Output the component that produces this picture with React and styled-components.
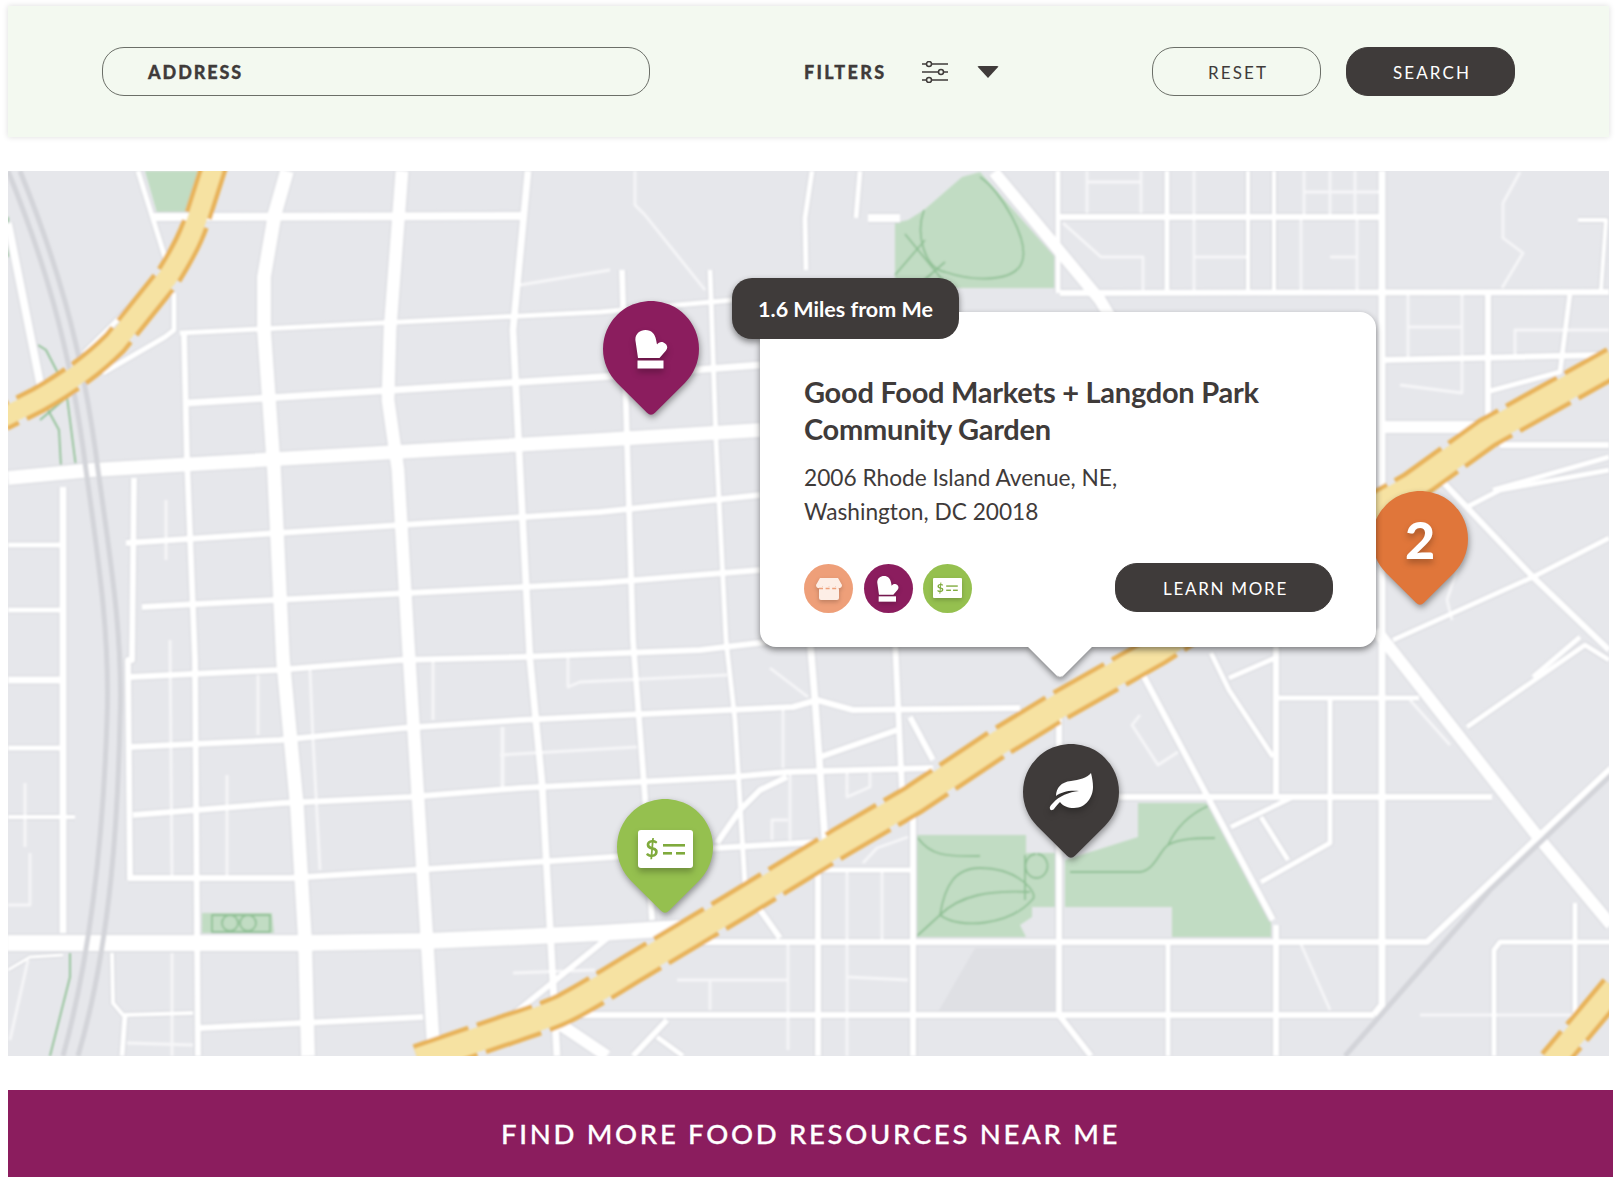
import styled, { createGlobalStyle } from 'styled-components';

const DARK = '#3f3b3a';
const PLUM = '#8b1d5e';
const LEAF = '#95c04f';

const GlobalStyle = createGlobalStyle`
  html, body { margin: 0; padding: 0; background: #fff; }
  body { font-family: "Lato", "Liberation Sans", sans-serif; color: ${DARK}; }
`;

const Page = styled.div`
  width: 1618px;
  height: 1180px;
  box-sizing: border-box;
  padding: 6px 5px 0 8px;
  display: flex;
  flex-direction: column;
  overflow: hidden;
`;

const Toolbar = styled.div`
  width: 1601px;
  height: 131px;
  box-sizing: border-box;
  padding: 0 94px;
  background: #f3f9f0;
  box-shadow: 0 0 6px rgba(0, 0, 0, 0.14);
  display: flex;
  align-items: center;
`;

const AddressField = styled.div`
  width: 548px;
  height: 49px;
  box-sizing: border-box;
  padding-left: 45px;
  border: 1px solid #6b6f68;
  border-radius: 22px;
  display: flex;
  align-items: center;
  font-size: 18px;
  font-weight: 900;
  letter-spacing: 1.9px;
  -webkit-text-stroke: 0.3px ${DARK};
  margin-right: 154px;
`;

const Filters = styled.div`
  display: flex;
  align-items: center;
  font-size: 18px;
  font-weight: 900;
  letter-spacing: 2.3px;
  -webkit-text-stroke: 0.3px ${DARK};
`;

const SliderIcon = styled.svg`
  width: 26px;
  height: 22px;
  margin-left: 36px;
`;

const Caret = styled.div`
  width: 0;
  height: 0;
  margin-left: 29px;
  border-left: 11px solid transparent;
  border-right: 11px solid transparent;
  border-top: 12px solid ${DARK};
  border-radius: 2px;
`;

const Actions = styled.div`
  margin-left: auto;
  display: flex;
  gap: 25px;
`;

const PillButton = styled.button`
  width: 169px;
  height: 49px;
  box-sizing: border-box;
  border-radius: 22px;
  border: 1px solid ${(p) => (p.$dark ? DARK : '#6b6f68')};
  background: ${(p) => (p.$dark ? DARK : 'transparent')};
  color: ${(p) => (p.$dark ? '#fff' : DARK)};
  font-family: inherit;
  font-size: 17px;
  letter-spacing: 2.1px;
  padding: 2px 0 0 3px;
`;

const LearnMoreButton = styled(PillButton)`
  width: 218px;
  letter-spacing: 1.7px;
`;

const MapArea = styled.div`
  position: relative;
  width: 1601px;
  height: 885px;
  margin-top: 34px;
  flex: none;
`;

const MapDrawing = styled.svg`
  display: block;
  width: 1601px;
  height: 885px;
`;

const Pin = styled.div`
  position: absolute;
  left: ${(p) => p.$x - 8 - 48}px;
  top: ${(p) => p.$y - 171 - 48}px;
  width: 96px;
  height: 116px;
  display: flex;
  justify-content: center;
`;

const PinShape = styled.svg`
  position: absolute;
  left: 0;
  top: 0;
  filter: drop-shadow(1px 3px 3px rgba(0, 0, 0, 0.38));
`;

const PinGlyph = styled.div`
  position: relative;
  height: ${(p) => p.$height || 96}px;
  display: flex;
  align-items: center;
  filter: drop-shadow(0 4px 3px rgba(0, 0, 0, 0.25));
`;

const PinNumber = styled.span`
  color: #fff;
  font-size: 52px;
  font-weight: 900;
  line-height: 96px;
`;

const Card = styled.div`
  position: absolute;
  left: 752px;
  top: 141px;
  width: 616px;
  height: 335px;
  box-sizing: border-box;
  padding: 62px 43px 0 44px;
  background: #fff;
  border-radius: 16px;
  filter: drop-shadow(0 3px 3px rgba(0, 0, 0, 0.45));

  &::after {
    content: '';
    position: absolute;
    left: 276px;
    bottom: -22px;
    width: 48px;
    height: 48px;
    background: #fff;
    border-radius: 0 0 5px 0;
    transform: rotate(45deg);
  }
`;

const DistanceTag = styled.div`
  position: absolute;
  left: -28px;
  top: -34px;
  width: 227px;
  height: 61px;
  border-radius: 20px;
  background: ${DARK};
  color: #fff;
  display: flex;
  align-items: center;
  justify-content: center;
  font-size: 21.5px;
  font-weight: 700;
`;

const Title = styled.h2`
  margin: 0 0 14px;
  font-size: 29px;
  line-height: 36.5px;
  font-weight: 700;
  letter-spacing: -0.26px;
`;

const Address = styled.p`
  margin: 0 0 34px;
  font-size: 22.7px;
  line-height: 33.5px;
`;

const CardFooter = styled.div`
  display: flex;
  align-items: center;
  justify-content: space-between;
  position: relative;
  z-index: 1;
`;

const Badges = styled.div`
  display: flex;
  gap: 10.5px;
  margin-top: 2px;
`;

const Badge = styled.div`
  width: 49px;
  height: 49px;
  border-radius: 50%;
  background: ${(p) => p.$color};
  display: flex;
  align-items: center;
  justify-content: center;

  svg {
    filter: drop-shadow(0 2px 2px rgba(0, 0, 0, 0.2));
  }
`;

const Banner = styled.div`
  width: 1605px;
  height: 87px;
  margin-top: 34px;
  flex: none;
  background: ${PLUM};
  color: #fff;
  display: flex;
  align-items: center;
  justify-content: center;
  font-size: 27.5px;
  font-weight: 500;
  letter-spacing: 2.7px;
  -webkit-text-stroke: 0.3px #fff;
`;

// wide roads get a faint darker edge, like the blocks on the base map
const roads = [
  [14, '287,171 275,213 264,277 264,330 274,470 283,660 297,807 305,940 308,1056'],
  [13, '402,171 390,330 388,400 398,470 408,640 427,940 434,1056'],
  [7, '528,171 513,330 520,470 530,660 542,783 550,927 557,1056'],
  [6, '622,270 627,440 633,640 645,797 652,920'],
  [5, '710,270 716,440 726,640 735,720 745,885'],
  [7, '810,640 815,700 825,840'],
  [6, '895,640 902,790'],
  [6, '913,810 913,1056'],
  [6, '818,870 818,1056'],
  [6, '1059,690 1059,1015 1091,1056'],
  [5, '1168,942 1168,1056'],
  [6, '1276,640 1276,797'],
  [6, '1276,925 1276,1056'],
  [5, '1330,700 1330,843 1261,882'],
  [7, '1382,171 1382,1005 1374,1015'],
  [12, '994,172 1100,300 1115,325'],
  [12, '1376,630 1538,837 1611,925'],
  [6, '1142,673 1273,920'],
  [5, '1211,653 1229,690 1273,757'],
  [5, '1229,678 1275,658'],
  [6, '700,942 1427,942 1542,833 1611,768'],
  [5, '1494,1056 1494,950 1500,942 1611,942'],
  [5, '1575,903 1575,1056'],
  [6, '580,1015 1374,1015'],
  [6, '1059,797 1293,797 1492,797'],
  [5, '1293,797 1231,827'],
  [5, '1277,698 1419,698'],
  [5, '1467,727 1585,645 1609,660'],
  [5, '1261,817 1288,860'],
  [8, '153,217 523,216'],
  [8, '868,218 900,218'],
  [6, '1060,217 1380,217'],
  [6, '1060,293 1609,292'],
  [5, '180,333 600,312 733,300'],
  [7, '187,403 600,377 760,365'],
  [14, '8,478 92,470 600,440 760,430'],
  [6, '126,543 600,512 760,495'],
  [6, '142,607 600,583 760,570'],
  [6, '130,677 277,670 400,660 520,657 700,650 767,642'],
  [6, '130,747 280,740 403,728 520,720 727,710 793,707 817,700 853,710 1020,708'],
  [6, '133,815 283,803 410,797 520,788 733,777 787,772 933,768'],
  [6, '128,878 290,878 413,870 520,863 613,857 717,848 817,842'],
  [16, '7,943 300,943 427,941 520,937 600,933 680,928'],
  [6, '200,1028 423,1017'],
  [7, '63,487 63,933'],
  [8, '8,223 42,393'],
  [6, '184,333 187,460 195,660 198,1056'],
  [6, '134,478 132,660 128,660 130,880'],
  [7, '8,680 63,680'],
  [5, '8,748 60,748'],
  [4, '8,817 75,817'],
  [5, '8,545 60,545'],
  [5, '8,610 60,610'],
  [5, '138,171 168,267'],
  [5, '168,270 84,353'],
  [5, '174,293 174,330 165,337 103,373'],
  [4, '112,953 113,1003 123,1015 193,1013'],
  [5, '125,1015 122,1056'],
  [3, '8,970 30,957 63,955'],
  [6, '717,843 740,810 760,790 787,777'],
  [6, '820,757 897,730'],
  [6, '910,717 933,760'],
  [5, '817,870 913,870'],
  [6, '758,907 780,938'],
  [6, '610,936 510,1017'],
  [12, '558,1023 607,1056'],
  [6, '667,1020 633,1056'],
  [5, '657,1037 683,1056'],
  [6, '1488,293 1488,427'],
  [12, '1380,427 1487,427'],
  [6, '1382,360 1600,355'],
  [5, '1490,391 1560,372 1570,293'],
  [6, '1500,445 1609,445'],
  [5, '1493,490 1609,457'],
  [6, '1443,482 1533,577 1609,650'],
  [5, '1467,507 1500,490 1609,470'],
  [5, '1393,640 1533,577 1609,538'],
  [5, '1580,637 1533,677'],
  [4, '1578,220 1606,220 1601,290'],
  [5, '1058,171 1058,293'],
  [5, '1167,171 1167,293'],
  [4, '1248,171 1248,293'],
  [4, '1274,171 1274,293'],
  [5, '860,171 856,218'],
  [5, '812,171 805,218 806,270'],
];

const lanes = [
  '520,285 610,270',
  '635,171 635,205 645,215 705,290',
  '1087,171 1087,213',
  '1141,171 1141,213',
  '1087,182 1141,182',
  '1194,171 1194,293',
  '1194,257 1248,257',
  '1063,223 1101,257 1143,257 1143,290',
  '1304,171 1304,217',
  '1304,192 1382,192',
  '1301,220 1301,290',
  '1330,171 1330,217',
  '1355,171 1355,217',
  '1330,257 1357,257',
  '1357,220 1357,290',
  '1408,293 1408,357',
  '1462,293 1462,393 1400,385',
  '1408,327 1462,327',
  '1515,357 1515,330 1609,330',
  '568,655 568,687 580,682 727,675',
  '503,727 503,787',
  '500,755 637,747',
  '770,668 808,697',
  '783,707 783,768',
  '790,773 790,840',
  '847,773 847,797 870,787 870,773',
  '772,840 772,820 788,820',
  '863,863 877,848 908,837',
  '847,870 847,1056',
  '882,870 882,942',
  '788,942 788,1050',
  '677,980 788,980',
  '710,980 710,1010',
  '847,977 908,980',
  '513,973 595,970',
  '170,640 172,880',
  '172,953 172,1056',
  '127,1043 193,1045',
  '227,775 227,880',
  '258,675 258,735',
  '310,670 313,740 320,870',
  '433,660 433,720',
  '502,727 502,787',
  '25,783 25,847',
  '30,853 30,905 8,905',
  '28,960 10,1040',
  '166,500 166,560',
  '1450,745 1410,700',
  '1420,1015 1595,1015',
  '1300,942 1330,1010',
  '1520,172 1503,203 1503,238 1523,253 1502,288',
  '1405,555 1460,560 1447,600 1452,620',
  '1140,715 1132,725 1158,765 1178,752',
];

const railLines = [
  'M8 171 C40 250 70 340 86 470 C100 570 110 640 107 720 C104 810 95 940 63 1056',
  'M20 171 C52 250 82 340 98 470 C112 570 123 640 120 720 C118 810 112 940 78 1056',
  'M1611 775 L1490 890 L1345 1056',
];

const highways = [
  [33, 'M418 1060 L500 1032 C530 1022 550 1016 567 1007 C590 995 610 982 633 968 L733 908 L841 842 L913 800 L1000 742 L1059 706 L1158 650 L1380 505 L1412 487 L1487 433 L1614 362'],
  [28, 'M216 160 L199 213 C192 235 186 248 168 277 L115 343 C95 363 70 382 38 400 L2 418'],
  [30, 'M1614 988 L1552 1062'],
];

const parks = [
  '145,171 205,171 191,213 157,213',
  '980,172 1055,257 1055,288 895,288 895,223 908,220 924,210 962,177',
  '1138,803 1208,803 1271,920 1271,937 1172,937 1172,907 1065,907 1065,860 1138,837',
  '917,835 1026,835 1026,853 1055,853 1055,907 1032,907 1032,917 1020,925 1026,937 917,937',
  '202,913 272,913 274,933 202,933',
];

const trails = [
  'M924 210 C915 235 925 268 945 272 C975 282 1015 282 1022 262 C1030 240 1000 190 980 177',
  'M905 234 L945 283 M895 275 L925 240 M915 288 L945 262',
  'M918 838 C930 855 945 857 980 856',
  'M917 936 L940 915 C945 885 955 868 980 868 C1020 868 1040 895 1032 900 C1010 925 960 930 940 915 C960 895 990 890 1030 892',
  'M1070 872 H1140 C1155 870 1160 850 1168 845 C1175 830 1188 815 1208 806 M1168 845 C1180 838 1200 838 1215 838',
  'M1036 854 a11 12 0 1 0 1 0 M1025 855 V900',
  'M212 915 V932 H270 V915 Z M222 923 a8 8 0 1 0 16 0 a8 8 0 1 0 -16 0 M240 923 a8 8 0 1 0 16 0 a8 8 0 1 0 -16 0',
  'M38 345 L46 350 L63 383 M48 410 L59 430 L61 467 M67 397 L76 467 M40 420 L67 397',
  'M70 953 V977 L50 1056',
  'M8 217 V257',
];

function CityMap() {
  return (
    <MapDrawing viewBox="8 171 1601 885">
      <defs>
        <filter id="soft">
          <feGaussianBlur stdDeviation="0.8" />
        </filter>
      </defs>
      <rect x="8" y="171" width="1601" height="885" fill="#e6e7eb" />
      <g filter="url(#soft)" fill="none" strokeLinejoin="round">
        <polygon points="975,948 1055,948 1055,1012 938,1012" fill="#dfe0e4" />
        {parks.map((p) => (
          <polygon key={p} points={p} fill="#c1dcc3" />
        ))}
        {trails.map((d) => (
          <path key={d} d={d} stroke="#8fc094" strokeWidth="1.8" />
        ))}
        {roads.map(([w, pts]) => (
          <polyline key={pts} points={pts} stroke="#d9dadf" strokeWidth={w + 2.5} />
        ))}
        {lanes.map((pts) => (
          <polyline key={pts} points={pts} stroke="#f6f6f8" strokeWidth="2.8" />
        ))}
        {roads.map(([w, pts]) => (
          <polyline key={pts} points={pts} stroke="#fff" strokeWidth={w} />
        ))}
        {railLines.map((d) => (
          <path key={d} d={d} stroke="#d3d4d9" strokeWidth="5" />
        ))}
        {highways.map(([w, d]) => (
          <g key={d}>
            <path d={d} stroke="#e8b35a" strokeWidth={w} strokeDasharray="58 9" />
            <path d={d} stroke="#f6e2a2" strokeWidth={w - 9} />
          </g>
        ))}
      </g>
    </MapDrawing>
  );
}

function Teardrop({ color }) {
  return (
    <PinShape width="96" height="116" viewBox="0 0 96 116">
      <path d="M14.1 81.9 A48 48 0 1 1 81.9 81.9 L52 111.8 Q48 115.8 44 111.8 Z" fill={color} />
    </PinShape>
  );
}

function Mitt({ size = 33 }) {
  return (
    <svg width={size} height={(size * 39) / 33} viewBox="0 0 33 39" fill="#fff">
      <path d="M3 28 L0.5 11 C-0.5 4.5 4.5 0 10.5 0 C16.5 0 20 4 21 9.5 L22 14.5 C23.5 12.5 26 11.5 28.5 12.5 C32 14 33.5 17.5 31 20.5 L24.5 28 Z" />
      <rect x="2.5" y="30.5" width="26" height="8" />
    </svg>
  );
}

function Leaf() {
  return (
    <svg width="44" height="38" viewBox="0 0 44 38" fill="#fff">
      <path d="M42 0 C38 5 30 7 22 8 C12 9 7 15 7 23 C12 19 20 17 30 18 C20 19 10 23 4 30 C2 32 0 34 1 36 C2 38 4 37 5 36 C7 33 9 31 11 29 C14 33 19 35 25 35 C37 35 44 24 44 14 C44 9 43 4 42 0 Z" />
    </svg>
  );
}

function Voucher({ width, radius = 3 }) {
  return (
    <svg width={width} height={(width * 38) / 55} viewBox="0 0 55 38">
      <rect width="55" height="38" rx={radius} fill="#fff" />
      <text x="14" y="27" fontFamily="Lato, sans-serif" fontWeight="700" fontSize="23" fill="#7faa3c" textAnchor="middle">$</text>
      <rect x="25" y="14" width="22" height="2.6" fill="#7faa3c" />
      <rect x="25" y="22" width="9" height="2.6" fill="#7faa3c" />
      <rect x="38" y="22" width="9" height="2.6" fill="#7faa3c" />
    </svg>
  );
}

function Store() {
  return (
    <svg width="26" height="22" viewBox="0 0 26 22">
      <rect x="3" y="9" width="20" height="13" rx="2" fill="#fdeee6" />
      <path d="M4 0 H22 L26 7 C26 11 21 11 19.5 8.5 C18 11 15 11 13 8.5 C11 11 8 11 6.5 8.5 C5 11 0 11 0 7 Z" fill="#fdeee6" />
      <path d="M3 10.5 H23" stroke="#ee9f79" strokeWidth="1.5" strokeDasharray="4 2.6" />
    </svg>
  );
}

export default function App() {
  return (
    <>
      <GlobalStyle />
      <Page>
        <Toolbar>
          <AddressField>ADDRESS</AddressField>
          <Filters>
            FILTERS
            <SliderIcon viewBox="0 0 26 22" fill="none" stroke={DARK} strokeWidth="1.5">
              <path d="M0 3 H4.5 M9.5 3 H26 M0 11 H16.5 M21.5 11 H26 M0 19 H4.5 M9.5 19 H26" />
              <circle cx="7" cy="3" r="2.5" />
              <circle cx="19" cy="11" r="2.5" />
              <circle cx="7" cy="19" r="2.5" />
            </SliderIcon>
            <Caret />
          </Filters>
          <Actions>
            <PillButton>RESET</PillButton>
            <PillButton $dark>SEARCH</PillButton>
          </Actions>
        </Toolbar>

        <MapArea>
          <CityMap />

          <Pin $x={651} $y={349}>
            <Teardrop color={PLUM} />
            <PinGlyph><Mitt /></PinGlyph>
          </Pin>
          <Pin $x={665} $y={847}>
            <Teardrop color={LEAF} />
            <PinGlyph $height={100}><Voucher width={55} /></PinGlyph>
          </Pin>
          <Pin $x={1420} $y={539}>
            <Teardrop color="#e0763a" />
            <PinGlyph><PinNumber>2</PinNumber></PinGlyph>
          </Pin>
          <Pin $x={1071} $y={792}>
            <Teardrop color={DARK} />
            <PinGlyph><Leaf /></PinGlyph>
          </Pin>

          <Card>
            <DistanceTag>1.6 Miles from Me</DistanceTag>
            <Title>Good Food Markets + Langdon Park<br />Community Garden</Title>
            <Address>2006 Rhode Island Avenue, NE,<br />Washington, DC 20018</Address>
            <CardFooter>
              <Badges>
                <Badge $color="#ee9f79"><Store /></Badge>
                <Badge $color={PLUM}><Mitt size={22} /></Badge>
                <Badge $color={LEAF}><Voucher width={29} radius={2} /></Badge>
              </Badges>
              <LearnMoreButton $dark>LEARN MORE</LearnMoreButton>
            </CardFooter>
          </Card>
        </MapArea>

        <Banner>FIND MORE FOOD RESOURCES NEAR ME</Banner>
      </Page>
    </>
  );
}
